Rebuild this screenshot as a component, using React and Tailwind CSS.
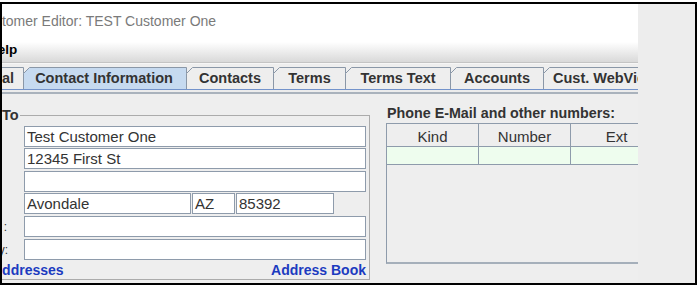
import React from "react";

function Tab({ label, w, selected, className }) {
  return (
    <div className={`relative shrink-0 h-[22px] flex items-center ${className}`}>
      <svg className="absolute left-0 top-0" width={w} height={22}>
        <path
          d={`M0.5 22 V6.5 L6.5 0.5 H${w - 0.5} V22`}
          fill={selected ? "#c6daf0" : "#eeeeee"}
          stroke="#8a97a7"
          strokeWidth="1"
        />
      </svg>
      <span className="relative text-[14.5px] leading-[16px] font-bold text-[#333333] whitespace-nowrap">{label}</span>
    </div>
  );
}

export default function App() {
  return (
    <div className="w-[700px] h-[290px] bg-white pt-[2px] overflow-hidden font-['Liberation_Sans',Arial,sans-serif]">
      <div className="w-[697px] h-[283px] border-2 border-black flex overflow-hidden">
        {/* window */}
        <div className="w-[636px] shrink-0 h-full bg-[#eeeeee] overflow-hidden flex flex-col">
          {/* title bar */}
          <div className="h-[33px] shrink-0 bg-white flex items-center">
            <span className="ml-[-25px] text-[14px] leading-[16px] text-[#7a7a7a] whitespace-nowrap">
              Customer Editor: TEST Customer One
            </span>
          </div>
          {/* menu bar */}
          <div className="h-[26px] shrink-0 bg-gradient-to-b from-white from-[20%] to-[#d9d9d9] border-b border-[#c4c4c4] flex items-center">
            <span className="ml-[-14px] text-[13.5px] leading-[16px] font-bold text-black">Help</span>
          </div>
          <div className="h-[1px] shrink-0 bg-[#f6f6f6]" />
          {/* tabs */}
          <div className="pt-[3px] shrink-0">
            <div className="flex h-[22px]">
              <Tab label="General" w={70} className="w-[70px] ml-[-48px] justify-end pr-[10px]" />
              <Tab label="Contact Information" w={164} selected className="w-[164px] ml-[-1px] justify-center pr-[2px]" />
              <Tab label="Contacts" w={88} className="w-[88px] ml-[-1px] justify-center" />
              <Tab label="Terms" w={73} className="w-[73px] ml-[-1px] justify-center" />
              <Tab label="Terms Text" w={106} className="w-[106px] ml-[-1px] justify-center" />
              <Tab label="Accounts" w={94} className="w-[94px] ml-[-1px] justify-center" />
              <Tab label="Cust. WebView" w={120} className="w-[120px] ml-[-1px] justify-start pl-[10px]" />
            </div>
            <div className="h-[1px] bg-[#7393cb]" />
            <div className="h-[2px] bg-[#ececec]" />
            <div className="h-[2px] bg-[#a9b2bc]" />
          </div>
          {/* content */}
          <div className="flex items-start">
            <fieldset className="ml-[-12px] mt-[13px] w-[380px] shrink-0 border border-[#ababab] pt-[3px] pr-[3px]">
              <legend className="ml-[11px] pr-[1px] text-[14.5px] leading-[16px] font-bold text-[#333333]">To</legend>
              <div className="flex h-[21px]">
                <div className="w-[33px] shrink-0" />
                <div className="flex-1 h-[21px] bg-white border border-[#8e9bab] flex items-center pl-[2px] text-[15px] leading-[17px] text-[#333333]">
                  Test Customer One
                </div>
              </div>
              <div className="flex h-[21px] mt-[1px]">
                <div className="w-[33px] shrink-0" />
                <div className="flex-1 h-[21px] bg-white border border-[#8e9bab] flex items-center pl-[2px] text-[15px] leading-[17px] text-[#333333]">
                  12345 First St
                </div>
              </div>
              <div className="flex h-[21px] mt-[2px]">
                <div className="w-[33px] shrink-0" />
                <div className="flex-1 h-[21px] bg-white border border-[#8e9bab]" />
              </div>
              <div className="flex h-[21px] mt-[1px] gap-[1px]">
                <div className="w-[32px] shrink-0" />
                <div className="w-[167px] h-[21px] bg-white border border-[#8e9bab] flex items-center pl-[2px] text-[15px] leading-[17px] text-[#333333]">
                  Avondale
                </div>
                <div className="w-[43px] h-[21px] bg-white border border-[#8e9bab] flex items-center pl-[2px] text-[15px] leading-[17px] text-[#333333]">
                  AZ
                </div>
                <div className="w-[98px] h-[21px] bg-white border border-[#8e9bab] flex items-center pl-[2px] text-[15px] leading-[17px] text-[#333333]">
                  85392
                </div>
              </div>
              <div className="flex h-[21px] mt-[2px]">
                <div className="w-[33px] shrink-0 flex items-center justify-end pr-[17px] text-[12px] text-[#333333] whitespace-nowrap">
                  Attn :
                </div>
                <div className="flex-1 h-[21px] bg-white border border-[#8e9bab]" />
              </div>
              <div className="flex h-[21px] mt-[2px]">
                <div className="w-[33px] shrink-0 flex items-center justify-end pr-[16px] text-[12px] text-[#333333] whitespace-nowrap">
                  Country:
                </div>
                <div className="flex-1 h-[21px] bg-white border border-[#8e9bab]" />
              </div>
              <div className="h-[19px] flex items-center justify-between">
                <span className="ml-[1px] text-[14px] leading-[16px] font-bold text-[#1c3bc0]">Addresses</span>
                <span className="text-[14px] leading-[16px] font-bold text-[#1c3bc0]">Address Book</span>
              </div>
            </fieldset>

            <div className="ml-[16px] mt-[11px] w-[276px] shrink-0">
              <div className="ml-[1px] text-[14.3px] leading-[16px] font-bold text-[#333333] whitespace-nowrap">
                Phone E-Mail and other numbers:
              </div>
              <div className="mt-[2px] h-[141px] border-l border-t border-[#8e9bab] border-b-2 border-b-[#a5afba]">
                <div className="flex h-[23px] border-b border-[#8e9bab]">
                  <div className="w-[92px] shrink-0 border-r border-[#8e9bab] flex items-center justify-center pt-[2px] text-[15px] leading-[17px] text-[#333333]">Kind</div>
                  <div className="w-[92px] shrink-0 border-r border-[#8e9bab] flex items-center justify-center pt-[2px] text-[15px] leading-[17px] text-[#333333]">Number</div>
                  <div className="w-[92px] shrink-0 border-r border-[#8e9bab] flex items-center justify-center pt-[2px] text-[15px] leading-[17px] text-[#333333]">Ext</div>
                </div>
                <div className="flex h-[18px] border-b border-[#8e9bab] bg-[#eefdee]">
                  <div className="w-[92px] shrink-0 border-r border-[#8e9bab]" />
                  <div className="w-[92px] shrink-0 border-r border-[#8e9bab]" />
                  <div className="w-[92px] shrink-0 border-r border-[#8e9bab]" />
                </div>
              </div>
            </div>
          </div>
        </div>
        {/* outside area */}
        <div className="flex-1 h-full bg-[#ededed]" />
      </div>
    </div>
  );
}
